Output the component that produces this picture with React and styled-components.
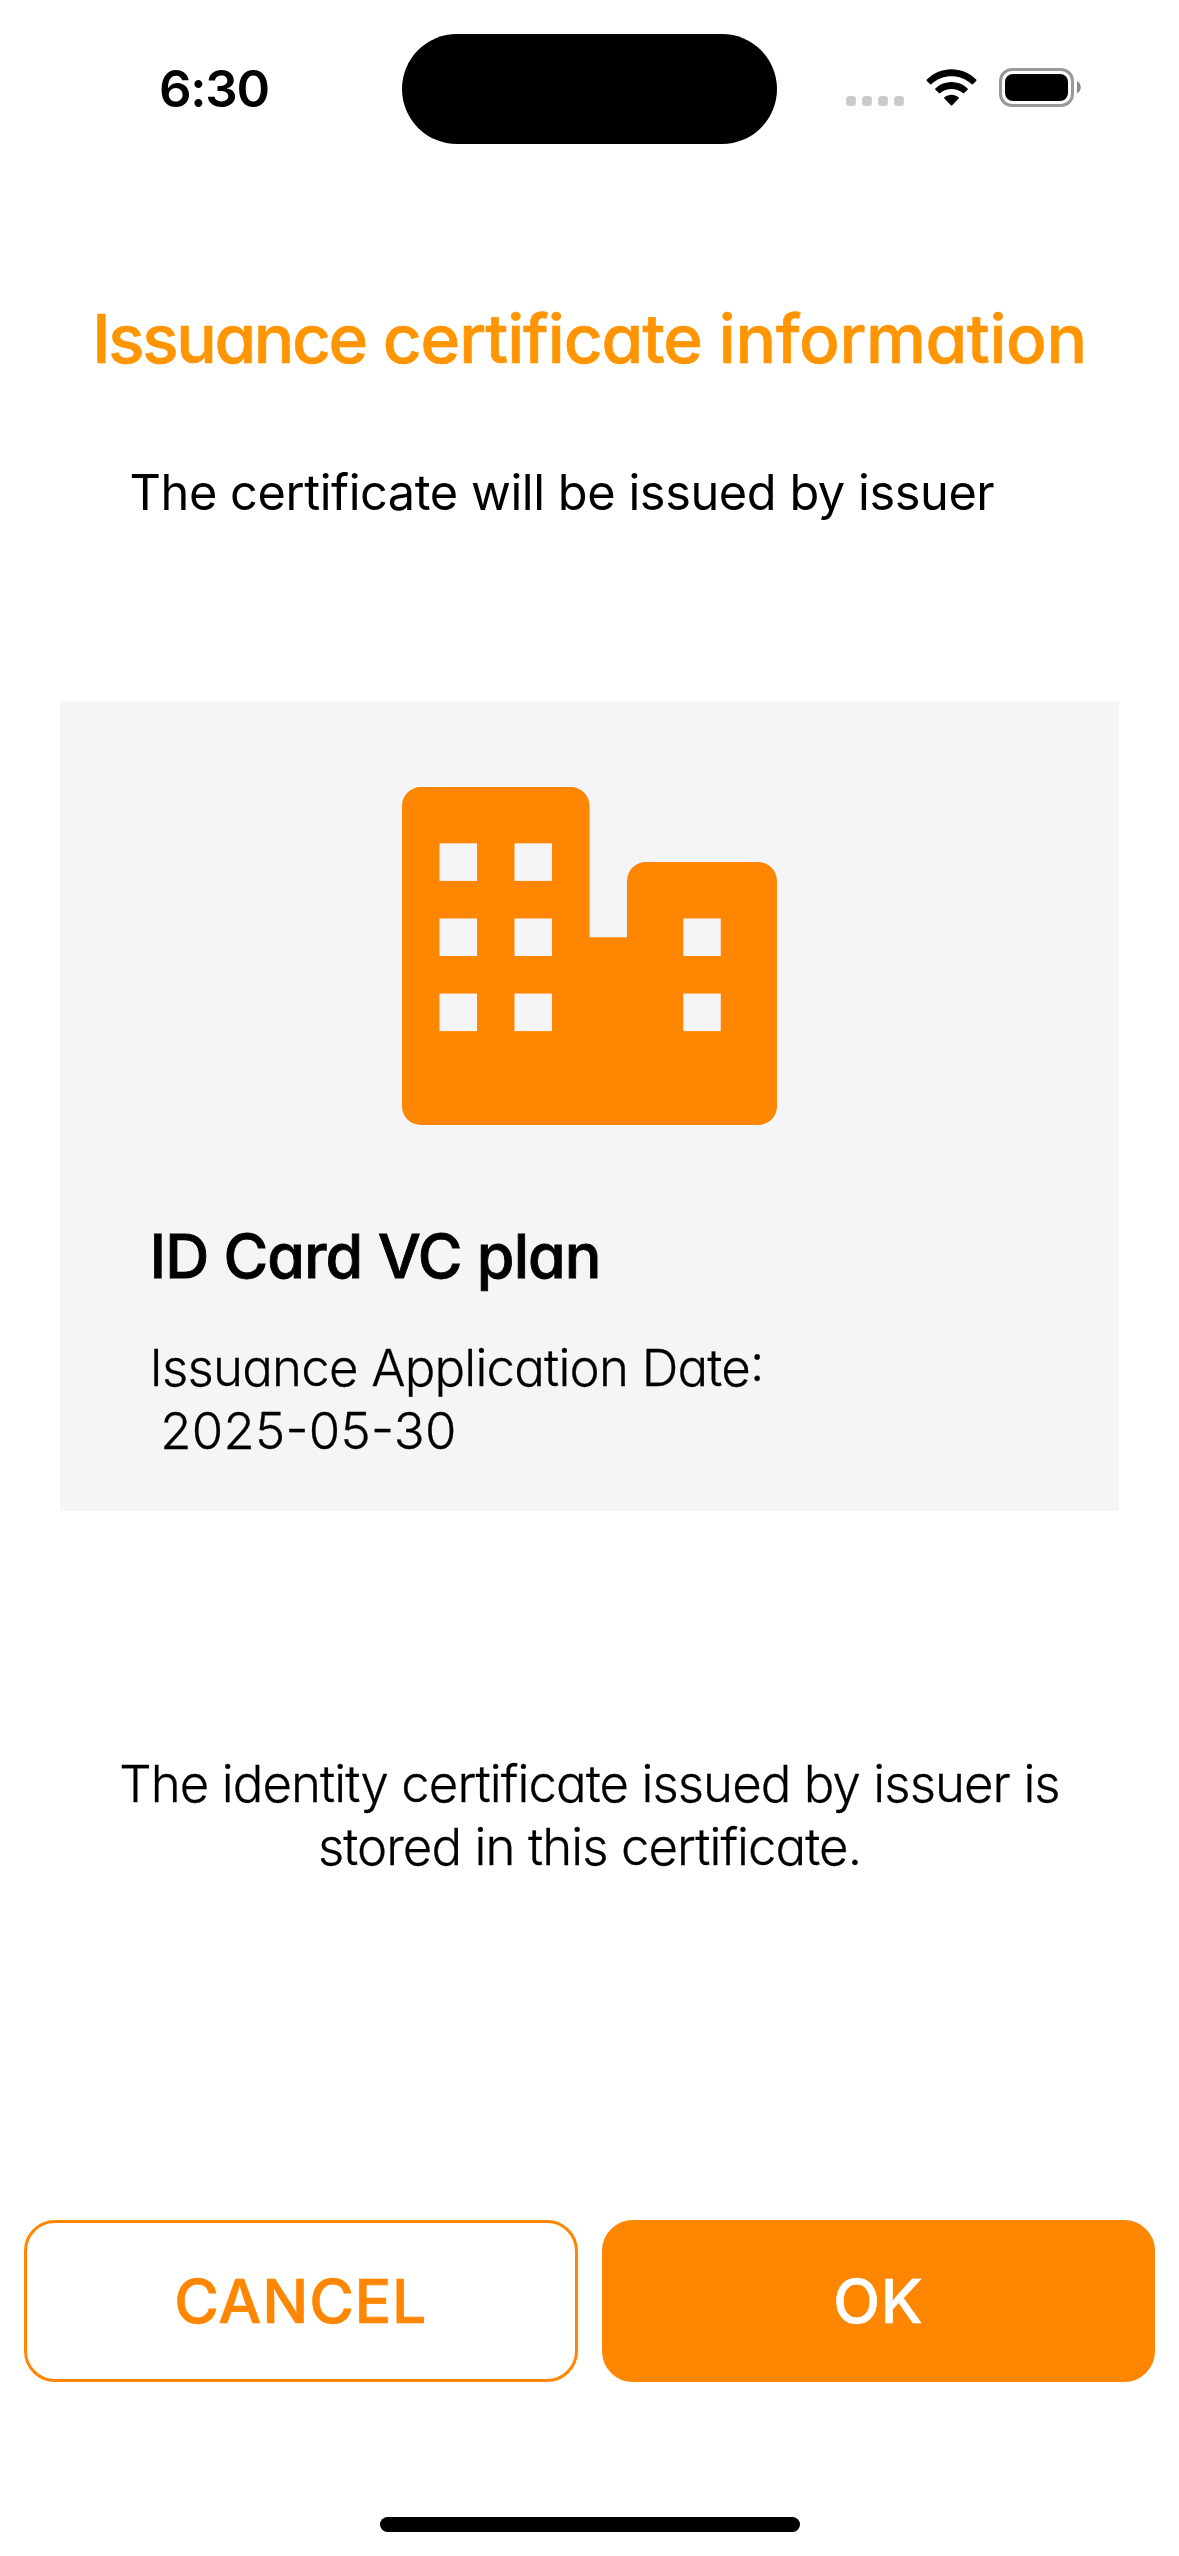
import React from "react";
import styled, { createGlobalStyle } from "styled-components";

const ORANGE = "#ff8600";
const PANEL = "#f5f5f8";

const GlobalStyle = createGlobalStyle`
  * { box-sizing: border-box; }
  body {
    margin: 0;
    background: #fff;
    color: #000;
    font-family: Inter, "Liberation Sans", sans-serif;
  }
`;

const Screen = styled.div`
  width: 1179px;
  height: 2556px;
  display: flex;
  flex-direction: column;
  background: #fff;
  overflow: hidden;
`;

const StatusBar = styled.header`
  height: 178px;
  padding-top: 34px;
  display: grid;
  grid-template-columns: 402px 375px 402px;
  align-items: start;
`;

const Clock = styled.time`
  padding: 25px 0 0 159px;
  font-size: 51px;
  font-weight: 600;
  line-height: 60px;
  letter-spacing: -1.3px;
`;

const Island = styled.div`
  height: 110px;
  border-radius: 55px;
  background: #000;
`;

const StatusIcons = styled.div`
  padding: 34px 0 0 69px;
  display: flex;
  align-items: flex-start;
`;

const SignalDots = styled.div`
  display: flex;
  gap: 6px;
  margin: 28px 22px 0 0;
`;

const Dot = styled.i`
  width: 10px;
  height: 10px;
  border-radius: 3.5px;
  background: #cbcbcb;
`;

const WifiIcon = styled.svg`
  width: 51px;
  height: 38px;
  margin: 1px 22px 0 0;
`;

const BatteryIcon = styled.svg`
  width: 82px;
  height: 39px;
`;

const Title = styled.h1`
  margin: 121px 0 0;
  text-align: center;
  color: #ff9500;
  font-size: 67.5px;
  font-weight: 500;
  line-height: 80px;
  letter-spacing: -1.1px;
  font-feature-settings: "cv11";
  -webkit-text-stroke: 0.6px currentColor;
`;

const Word = styled.span`
  letter-spacing: ${(p) => p.$spacing};
`;

const Subtitle = styled.p`
  margin: 84px 0 0 129.5px;
  font-size: 48.7px;
  line-height: 60px;
  letter-spacing: -0.42px;
`;

const Card = styled.section`
  width: 1059px;
  height: 810px;
  margin: 178px auto 0;
  padding: 86px 89.5px 0;
  background: ${PANEL};
  font-feature-settings: "cv11", "case";
`;

const BuildingIcon = styled.svg`
  display: block;
  width: 375px;
  height: 338px;
  margin: 0 auto 96px;
`;

const CardTitle = styled.h2`
  margin: 0 0 46px;
  font-size: 61px;
  font-weight: 500;
  line-height: 70px;
  letter-spacing: -0.95px;
  -webkit-text-stroke: 0.8px currentColor;
`;

const CardText = styled.p`
  margin: 0;
  font-size: 50.9px;
  font-weight: 300;
  line-height: 62.7px;
  letter-spacing: ${(p) => p.$spacing};
  white-space: pre-wrap;
  text-indent: ${(p) => p.$indent || 0};
  -webkit-text-stroke: 0.3px currentColor;
`;

const Notice = styled.p`
  margin: 241px 0 0;
  padding: 0 110px;
  text-align: center;
  font-size: 50.9px;
  font-weight: 300;
  line-height: 63px;
  letter-spacing: -0.92px;
  font-feature-settings: "cv11";
  -webkit-text-stroke: 0.3px currentColor;
`;

const Actions = styled.div`
  display: grid;
  grid-template-columns: 1fr 1fr;
  gap: 24px;
  margin-top: 342px;
  padding: 0 24px;
`;

const Button = styled.button`
  height: 162px;
  padding: 0;
  border: 3px solid ${ORANGE};
  border-radius: 31px;
  background: ${(p) => (p.$filled ? ORANGE : "#fff")};
  color: ${(p) => (p.$filled ? "#fff" : ORANGE)};
  font-family: inherit;
  font-size: 61px;
  font-weight: 500;
  letter-spacing: 0.7px;
  -webkit-text-stroke: 0.6px currentColor;
`;

const HomeIndicator = styled.div`
  width: 420px;
  height: 15px;
  margin: auto auto 24px;
  border-radius: 8px;
  background: #000;
`;

const windows = [
  [1, 1.5], [3, 1.5],
  [1, 3.5], [3, 3.5], [7.5, 3.5],
  [1, 5.5], [3, 5.5], [7.5, 5.5],
];

export default function App() {
  return (
    <>
      <GlobalStyle />
      <Screen>
        <StatusBar>
          <Clock>6:30</Clock>
          <Island />
          <StatusIcons>
            <SignalDots>
              <Dot /><Dot /><Dot /><Dot />
            </SignalDots>
            <WifiIcon viewBox="0 0 51 38">
              <path d="M0.8 10.6C14.4-3.2 36.6-3.2 50.2 10.6Q50.8 11.3 50.2 11.9L46.8 15.2Q46.1 15.7 45.5 15.1C34.3 4.6 16.7 4.6 5.5 15.1Q4.9 15.7 4.2 15.2L0.8 11.9Q0.2 11.3 0.8 10.6Z" />
              <path d="M9.4 19.4C18.4 10.9 32.6 10.9 41.6 19.4Q42.2 20 41.6 20.7L38.1 24.1Q37.4 24.7 36.8 24.1C30.4 18.5 20.6 18.5 14.2 24.1Q13.6 24.7 12.9 24.1L9.4 20.7Q8.8 20 9.4 19.4Z" />
              <path d="M18.4 28.2C22.5 24.8 28.5 24.8 32.6 28.2Q33.3 28.9 32.6 29.6L26.2 36.2Q25.5 36.8 24.8 36.2L18.4 29.6Q17.7 28.9 18.4 28.2Z" />
            </WifiIcon>
            <BatteryIcon viewBox="0 0 82 39">
              <rect x="1.5" y="1.5" width="72" height="36" rx="11.5" fill="none" stroke="#999" strokeWidth="3" />
              <rect x="6" y="6" width="63" height="27" rx="8" />
              <path d="M78 13C83 15.5 83 23 78 25.5Z" fill="#888" />
            </BatteryIcon>
          </StatusIcons>
        </StatusBar>

        <Title>
          <Word $spacing="-2.4px">Issuance</Word>{" "}
          <Word $spacing="-1.1px">certificate</Word>{" "}
          <Word $spacing="-0.4px">information</Word>
        </Title>
        <Subtitle>The certificate will be issued by issuer</Subtitle>

        <Card>
          <BuildingIcon viewBox="0 0 10 9" preserveAspectRatio="none">
            <path
              fill={ORANGE}
              d="M.5 0H4.5A.5 .5 0 0 1 5 .5V4H6V2.5A.5 .5 0 0 1 6.5 2H9.5A.5 .5 0 0 1 10 2.5V8.5A.5 .5 0 0 1 9.5 9H.5A.5 .5 0 0 1 0 8.5V.5A.5 .5 0 0 1 .5 0Z"
            />
            {windows.map(([x, y]) => (
              <rect key={`${x}-${y}`} x={x} y={y} width="1" height="1" fill={PANEL} />
            ))}
          </BuildingIcon>
          <CardTitle>ID Card VC plan</CardTitle>
          <CardText $spacing="-0.78px">Issuance Application Date:</CardText>
          <CardText $spacing="0.3px" $indent="-4px">{" 2025-05-30"}</CardText>
        </Card>

        <Notice>
          The identity certificate issued by issuer is<br />
          stored in this certificate.
        </Notice>

        <Actions>
          <Button>CANCEL</Button>
          <Button $filled>OK</Button>
        </Actions>

        <HomeIndicator />
      </Screen>
    </>
  );
}
